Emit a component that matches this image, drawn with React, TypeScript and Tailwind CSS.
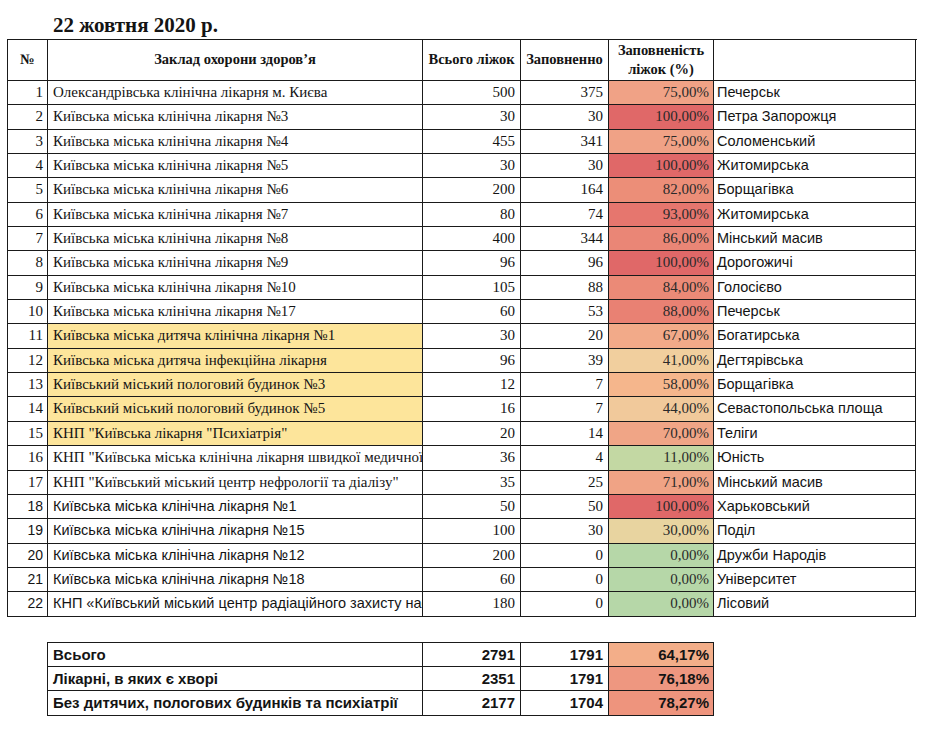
import React from "react";

type Row = {
  n: number;
  name: string;
  total: number;
  filled: number;
  pct: string;
  color: string;
  district: string;
  hl?: boolean;
  sans?: boolean;
};

const rows: Row[] = [
  { n: 1, name: "Олександрівська клінічна лікарня м. Києва", total: 500, filled: 375, pct: "75,00%", color: "bg-[#f0a286]", district: "Печерськ" },
  { n: 2, name: "Київська міська клінічна лікарня №3", total: 30, filled: 30, pct: "100,00%", color: "bg-[#e06868]", district: "Петра Запорожця" },
  { n: 3, name: "Київська міська клінічна лікарня №4", total: 455, filled: 341, pct: "75,00%", color: "bg-[#f0a286]", district: "Соломенський" },
  { n: 4, name: "Київська міська клінічна лікарня №5", total: 30, filled: 30, pct: "100,00%", color: "bg-[#e06868]", district: "Житомирська" },
  { n: 5, name: "Київська міська клінічна лікарня №6", total: 200, filled: 164, pct: "82,00%", color: "bg-[#ec8e78]", district: "Борщагівка" },
  { n: 6, name: "Київська міська клінічна лікарня №7", total: 80, filled: 74, pct: "93,00%", color: "bg-[#e6766e]", district: "Житомирська" },
  { n: 7, name: "Київська міська клінічна лікарня №8", total: 400, filled: 344, pct: "86,00%", color: "bg-[#ea8676]", district: "Мінський масив" },
  { n: 8, name: "Київська міська клінічна лікарня №9", total: 96, filled: 96, pct: "100,00%", color: "bg-[#e06868]", district: "Дорогожичі" },
  { n: 9, name: "Київська міська клінічна лікарня №10", total: 105, filled: 88, pct: "84,00%", color: "bg-[#eb8a77]", district: "Голосієво" },
  { n: 10, name: "Київська міська клінічна лікарня №17", total: 60, filled: 53, pct: "88,00%", color: "bg-[#e98173]", district: "Печерськ" },
  { n: 11, name: "Київська міська дитяча клінічна лікарня №1", total: 30, filled: 20, pct: "67,00%", color: "bg-[#f2aa89]", district: "Богатирська", hl: true },
  { n: 12, name: "Київська міська дитяча інфекційна лікарня", total: 96, filled: 39, pct: "41,00%", color: "bg-[#f1cf9e]", district: "Дегтярівська", hl: true },
  { n: 13, name: "Київський міський пологовий будинок №3", total: 12, filled: 7, pct: "58,00%", color: "bg-[#f5b68c]", district: "Борщагівка", hl: true },
  { n: 14, name: "Київський міський пологовий будинок №5", total: 16, filled: 7, pct: "44,00%", color: "bg-[#f1c99b]", district: "Севастопольська площа", hl: true },
  { n: 15, name: "КНП \"Київська лікарня \"Психіатрія\"", total: 20, filled: 14, pct: "70,00%", color: "bg-[#f0a586]", district: "Теліги", hl: true },
  { n: 16, name: "КНП \"Київська міська клінічна лікарня швидкої медичної допомоги\"", total: 36, filled: 4, pct: "11,00%", color: "bg-[#c3d8a3]", district: "Юність" },
  { n: 17, name: "КНП \"Київський міський центр нефрології та діалізу\"", total: 35, filled: 25, pct: "71,00%", color: "bg-[#f0a385]", district: "Мінський масив" },
  { n: 18, name: "Київська міська клінічна лікарня №1", total: 50, filled: 50, pct: "100,00%", color: "bg-[#e06868]", district: "Харьковський", sans: true },
  { n: 19, name: "Київська міська клінічна лікарня №15", total: 100, filled: 30, pct: "30,00%", color: "bg-[#e8d4a0]", district: "Поділ", sans: true },
  { n: 20, name: "Київська міська клінічна лікарня №12", total: 200, filled: 0, pct: "0,00%", color: "bg-[#b6d7a8]", district: "Дружби Народів", sans: true },
  { n: 21, name: "Київська міська клінічна лікарня №18", total: 60, filled: 0, pct: "0,00%", color: "bg-[#b6d7a8]", district: "Університет", sans: true },
  { n: 22, name: "КНП «Київський міський центр радіаційного захисту населення»", total: 180, filled: 0, pct: "0,00%", color: "bg-[#b6d7a8]", district: "Лісовий", sans: true },
];

const serif = "font-['Liberation_Serif','Times_New_Roman',serif]";
const sans = "font-['Liberation_Sans',Arial,sans-serif]";

const cell = "border-r border-b border-[#1a1a1a] h-[24.35px] leading-[23px] whitespace-nowrap overflow-hidden";
const head = `${serif} border-r border-b border-[#1a1a1a] h-[41px] flex items-center justify-center font-bold text-[14.5px] whitespace-nowrap`;

export default function App() {
  return (
    <div className="w-[939px] h-[736px] bg-white text-[#141414] overflow-hidden">
      <div className={`${serif} h-[39px] pt-[13px] pl-[53px] text-[21px] leading-[24px] font-bold`}>
        22 жовтня 2020 р.
      </div>
      <div className="ml-[7px] w-[910px] border-l border-t border-[#1a1a1a] grid grid-cols-[40px_375px_98px_88px_105px_202px]">
        <div className={head}>№</div>
        <div className={head}>Заклад охорони здоров’я</div>
        <div className={head}>Всього ліжок</div>
        <div className={head}>Заповненно</div>
        <div className={`${head} text-center leading-[19px]`}>
          Заповненість<br />ліжок (%)
        </div>
        <div className="border-r border-b border-[#1a1a1a] h-[41px]"></div>

        {rows.map((r) => (
          <React.Fragment key={r.n}>
            <div className={`${cell} ${r.n >= 18 ? sans + " text-[14px]" : serif + " text-[15px]"} text-right pr-[4px]`}>{r.n}</div>
            <div className={`${cell} ${r.sans ? sans + " text-[14.5px]" : serif + " text-[15px]"} pl-[5px] ${r.hl ? "bg-[#fde59b]" : ""}`}>{r.name}</div>
            <div className={`${cell} ${serif} text-[15px] text-right pr-[5px]`}>{r.total}</div>
            <div className={`${cell} ${serif} text-[15px] text-right pr-[5px]`}>{r.filled}</div>
            <div className={`${cell} ${serif} text-[15px] text-right pr-[4px] text-[#2a2a2a] ${r.color}`}>{r.pct}</div>
            <div className={`${cell} ${sans} text-[14.5px] pl-[3px]`}>{r.district}</div>
          </React.Fragment>
        ))}
      </div>

      <div className={`${sans} mt-[25px] ml-[47px] w-[667px] border-l border-t border-[#1a1a1a] grid grid-cols-[375px_98px_88px_105px] font-bold text-[15px]`}>
        {[
          ["Всього", "2791", "1791", "64,17%", "bg-[#f3ae89]"],
          ["Лікарні, в яких є хворі", "2351", "1791", "76,18%", "bg-[#ee9780]"],
          ["Без дитячих, пологових будинків та психіатрії", "2177", "1704", "78,27%", "bg-[#ee947d]"],
        ].map((t) => (
          <React.Fragment key={t[0]}>
            <div className={`${cell} pl-[5px]`}>{t[0]}</div>
            <div className={`${cell} text-right pr-[5px]`}>{t[1]}</div>
            <div className={`${cell} text-right pr-[5px]`}>{t[2]}</div>
            <div className={`${cell} text-right pr-[4px] ${t[4]}`}>{t[3]}</div>
          </React.Fragment>
        ))}
      </div>
    </div>
  );
}
